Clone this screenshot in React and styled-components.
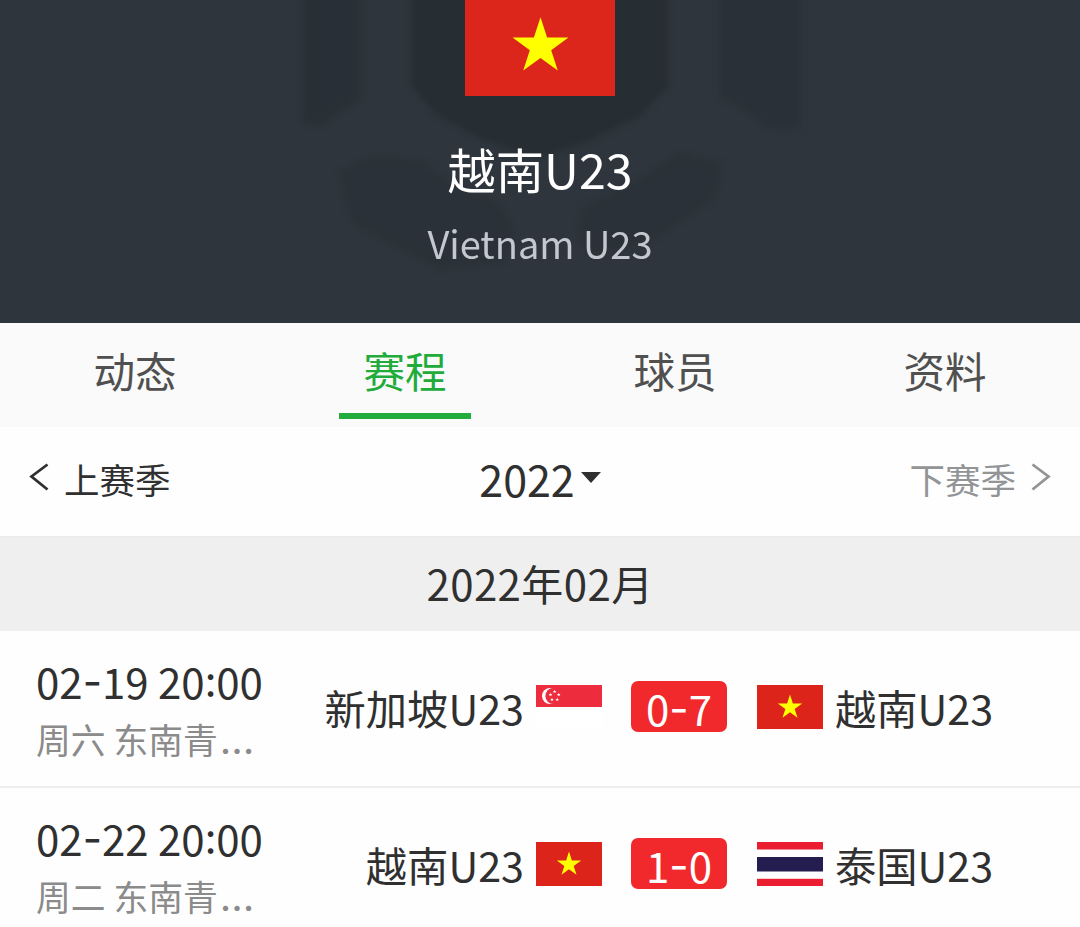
import styled, { createGlobalStyle } from 'styled-components'

const GlobalStyle = createGlobalStyle`
    * {
        box-sizing: border-box;
    }

    body {
        margin: 0;
        background-color: #fefefe;
        color: #303030;
        font-family: "Noto Sans CJK SC", sans-serif;
        overflow: hidden;
    }

    button {
        border: 0;
        padding: 0;
        background: none;
        color: inherit;
        font: inherit;
    }
`;

const Page = styled.div`
    width: 1080px;
    height: 927px;
    overflow: hidden;
`;

const StyledHeader = styled.header`
    position: relative;
    height: 323px;
    display: flex;
    flex-direction: column;
    align-items: center;
    background-color: #2e353c;

    .crest {
        position: absolute;
        inset: 0;
    }

    h1, p {
        position: relative;
        margin: 0;
        font-weight: 400;
        white-space: nowrap;
    }

    h1 {
        margin-top: 44px;
        font-size: 48.3px;
        line-height: 56px;
        color: #fff;
    }

    p {
        margin-top: 23px;
        font-size: 38px;
        line-height: 48px;
        color: #c3c8d0;
    }
`;

const BigFlag = styled.div`
    position: relative;
    width: 150px;
    height: 96px;
    flex: none;

    svg {
        display: block;
    }
`;

const Tabs = styled.nav`
    height: 104px;
    display: grid;
    grid-template-columns: repeat(4, 1fr);
    background-color: #fafafa;
`;

const Tab = styled.button`
    height: 96px;
    display: flex;
    flex-direction: column;
    align-items: center;
    justify-content: space-between;
    padding-top: 17px;
    font-size: 41.5px;
    line-height: 60px;
    color: ${({ $active }) => ($active ? '#20ab3b' : '#505050')};

    &::after {
        content: '';
        width: 132px;
        height: 6px;
        background-color: ${({ $active }) => ($active ? '#22ac3c' : 'transparent')};
    }
`;

const SeasonBar = styled.div`
    height: 109px;
    padding: 0 28px 8px;
    display: grid;
    grid-template-columns: 1fr auto 1fr;
    align-items: center;
`;

const SeasonButton = styled.button`
    display: flex;
    align-items: center;
    justify-self: ${({ $next }) => ($next ? 'end' : 'start')};
    gap: 14px;
    padding-top: 2px;
    font-size: 35.5px;
    line-height: 52px;
    color: ${({ $next }) => ($next ? '#929496' : '#303030')};

    svg {
        margin-bottom: 4px;
    }
`;

const SeasonPicker = styled.button`
    display: flex;
    align-items: center;
    gap: 6px;
    font-size: 43px;
    line-height: 60px;
`;

const MonthTitle = styled.h2`
    margin: 0;
    height: 95px;
    font-size: 42px;
    font-weight: 400;
    line-height: 90px;
    text-align: center;
    letter-spacing: 0.4px;
    background-color: #efefef;
    border-top: 2px solid #ebebeb;
`;

const MatchRow = styled.div`
    height: 157px;
    padding-left: 36px;
    display: grid;
    grid-template-columns: 240px 326px 155px 1fr;
    border-bottom: 2px solid #eeeeee;
`;

const When = styled.div`
    padding-top: 21px;
    white-space: nowrap;

    .time {
        font-size: 42px;
        line-height: 58px;
    }

    .league {
        font-size: 34.8px;
        line-height: 58px;
        color: #8b8b8b;
    }
`;

const Dash = styled.span`
    font-family: Inter, sans-serif;
    line-height: 1;
    vertical-align: 2px;
`;

const Colon = styled.span`
    vertical-align: 3px;
    line-height: 1;
`;

const Ellipsis = styled.span`
    margin-left: 2px;
    font-family: Inter, sans-serif;
    font-size: 40px;
    line-height: 1;
`;

const Team = styled.div`
    display: flex;
    justify-content: ${({ $home }) => ($home ? 'flex-end' : 'flex-start')};
    gap: 12px;
    padding-top: 54px;
    font-size: 41.3px;
    white-space: nowrap;

    .name {
        margin-top: -8px;
        line-height: 60px;
    }

    svg {
        flex: none;
    }
`;

const Score = styled.div`
    width: 96px;
    height: 51px;
    margin: 50px 0 0 29px;
    padding-top: 3px;
    border-radius: 7px;
    background-color: #f2292c;
    color: #fff;
    font-size: 42px;
    line-height: 48px;
    text-align: center;
`;

const Star = ({ cx, cy, r }) => {
    const points = Array.from({ length: 10 }, (_, i) => {
        const radius = i % 2 ? r * 0.382 : r
        const angle = (Math.PI / 5) * i - Math.PI / 2
        return `${cx + radius * Math.cos(angle)},${cy + radius * Math.sin(angle)}`
    })
    return <polygon points={points.join(' ')} />
}

const VietnamFlag = () => (
    <svg width="66" height="44" viewBox="0 0 66 44">
        <rect width="66" height="44" fill="#dc241b" />
        <g fill="#ff0"><Star cx={33} cy={22.4} r={12.8} /></g>
    </svg>
)

const SingaporeFlag = () => (
    <svg width="66" height="44" viewBox="0 0 66 44">
        <rect width="66" height="22" fill="#ed2d3d" />
        <rect y="22" width="66" height="22" fill="#fff" />
        <circle cx="14" cy="11" r="8" fill="#fff" />
        <circle cx="17.4" cy="11" r="8" fill="#ed2d3d" />
        <g fill="#fff">
            <Star cx={18.6} cy={6.6} r={2} />
            <Star cx={14.5} cy={9.7} r={2} />
            <Star cx={22.7} cy={9.7} r={2} />
            <Star cx={16} cy={14.6} r={2} />
            <Star cx={21.2} cy={14.6} r={2} />
        </g>
    </svg>
)

const ThailandFlag = () => (
    <svg width="66" height="44" viewBox="0 0 66 44">
        <rect width="66" height="44" fill="#fff" />
        <rect width="66" height="7.5" fill="#ea1d31" />
        <rect y="15" width="66" height="14.5" fill="#241d4f" />
        <rect y="36.8" width="66" height="7.2" fill="#ea1d31" />
    </svg>
)

const flags = {
    vn: VietnamFlag,
    sg: SingaporeFlag,
    th: ThailandFlag,
}

const tabs = ['动态', '赛程', '球员', '资料']

const matches = [
    {
        date: ['02', '19'],
        time: ['20', '00'],
        league: '周六 东南青',
        home: { name: '新加坡U23', flag: 'sg' },
        score: [0, 7],
        away: { name: '越南U23', flag: 'vn' },
    },
    {
        date: ['02', '22'],
        time: ['20', '00'],
        league: '周二 东南青',
        home: { name: '越南U23', flag: 'vn' },
        score: [1, 0],
        away: { name: '泰国U23', flag: 'th' },
    },
]

const Header = () => (
    <StyledHeader>
        <svg className="crest" width="1080" height="323" viewBox="0 0 1080 323">
            <defs>
                <filter id="soft" colorInterpolationFilters="sRGB"><feGaussianBlur stdDeviation="3" /></filter>
            </defs>
            <g fill="#262d33" filter="url(#soft)">
                <path d="M303 -20H360V98L322 124H303Z" opacity="0.7" />
                <path d="M412 -20H668V86L640 116L590 140L540 158L480 138L436 114L412 86Z" />
                <path d="M720 -20H800V128H768L740 106L720 96Z" opacity="0.6" />
                <path d="M340 172L370 158L420 160L444 180L500 206L514 232L504 262L440 268L352 222Z" opacity="0.5" />
                <path d="M722 164L680 154L640 180L584 208L578 236L592 254L650 240L712 200Z" opacity="0.5" />
            </g>
        </svg>
        <BigFlag>
            <svg width="150" height="96" viewBox="0 0 150 96">
                <rect width="150" height="96" fill="#dc261c" />
                <g fill="#ff0"><Star cx={75.5} cy={46.7} r={29.4} /></g>
            </svg>
        </BigFlag>
        <h1>越南U23</h1>
        <p>Vietnam U23</p>
    </StyledHeader>
)

const Match = ({ match }) => {
    const HomeFlag = flags[match.home.flag]
    const AwayFlag = flags[match.away.flag]

    return (
        <MatchRow>
            <When>
                <div className="time">
                    {match.date[0]}<Dash>-</Dash>{match.date[1]} {match.time[0]}<Colon>:</Colon>{match.time[1]}
                </div>
                <div className="league">{match.league}<Ellipsis>…</Ellipsis></div>
            </When>
            <Team $home>
                <span className="name">{match.home.name}</span>
                <HomeFlag />
            </Team>
            <Score>{match.score[0]}<Dash>-</Dash>{match.score[1]}</Score>
            <Team>
                <AwayFlag />
                <span className="name">{match.away.name}</span>
            </Team>
        </MatchRow>
    )
}

const App = () => {
    return (
        <Page>
            <GlobalStyle />
            <Header />
            <Tabs>
                {tabs.map((tab) => (
                    <Tab key={tab} $active={tab === '赛程'}>{tab}</Tab>
                ))}
            </Tabs>
            <SeasonBar>
                <SeasonButton>
                    <svg width="22" height="30" viewBox="0 0 22 30" fill="none" stroke="currentColor" strokeWidth="2.8">
                        <path d="M19.5 2.5L3.5 14.5L19.5 27.5" />
                    </svg>
                    上赛季
                </SeasonButton>
                <SeasonPicker>
                    2022
                    <svg width="20" height="11" viewBox="0 0 20 11" fill="currentColor">
                        <path d="M0 0H20L10 11Z" />
                    </svg>
                </SeasonPicker>
                <SeasonButton $next>
                    下赛季
                    <svg width="22" height="30" viewBox="0 0 22 30" fill="none" stroke="currentColor" strokeWidth="2.8">
                        <path d="M2.5 2.5L18.5 14.5L2.5 27.5" />
                    </svg>
                </SeasonButton>
            </SeasonBar>
            <MonthTitle>2022年02月</MonthTitle>
            {matches.map((match) => (
                <Match key={match.date.join('-')} match={match} />
            ))}
        </Page>
    )
}

export default App
